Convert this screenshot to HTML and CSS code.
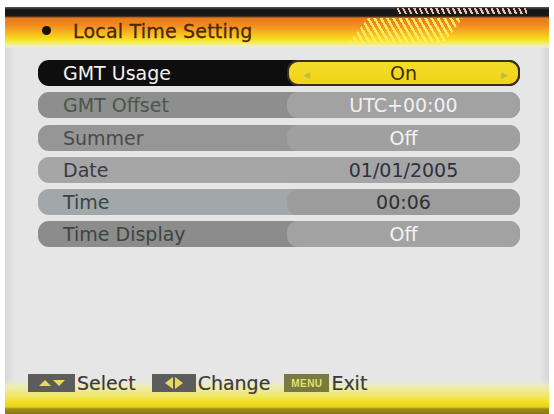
FILE: index.html
```html
<!DOCTYPE html>
<html>
<head>
<meta charset="utf-8">
<link rel="stylesheet" href="styles.css">
</head>
<body>
<div class="screen">
  <div class="header">
    <div class="stripes"></div>
    <div class="dashes"></div>
    <span class="bullet"></span>
    <span class="title">Local Time Setting</span>
  </div>
  <div class="list">
    <div class="row active">
      <div class="label">GMT Usage</div>
      <div class="value"><span class="arr">&#9664;</span><span class="val">On</span><span class="arr">&#9654;</span></div>
    </div>
    <div class="row r2">
      <div class="label">GMT Offset</div>
      <div class="value"><span class="val">UTC+00:00</span></div>
    </div>
    <div class="row r3">
      <div class="label">Summer</div>
      <div class="value"><span class="val">Off</span></div>
    </div>
    <div class="row r4">
      <div class="label">Date</div>
      <div class="value"><span class="val">01/01/2005</span></div>
    </div>
    <div class="row r5">
      <div class="label">Time</div>
      <div class="value"><span class="val">00:06</span></div>
    </div>
    <div class="row r6">
      <div class="label">Time Display</div>
      <div class="value"><span class="val">Off</span></div>
    </div>
  </div>
  <div class="footer">
    <div class="keys">
      <span class="key k-ud"><svg width="30" height="10" viewBox="0 0 30 10"><polygon points="2,8 8,2 14,8" fill="#e8d860"/><polygon points="16,2 28,2 22,8" fill="#e8d860"/></svg></span>
      <span class="ktext">Select</span>
      <span class="key k-lr"><svg width="24" height="12" viewBox="0 0 24 12"><polygon points="11,0 11,12 3,6" fill="#e8d860"/><polygon points="13,0 13,12 21,6" fill="#e8d860"/></svg></span>
      <span class="ktext">Change</span>
      <span class="key k-menu">MENU</span>
      <span class="ktext">Exit</span>
    </div>
  </div>
</div>
</body>
</html>
```
FILE: styles.css
```css
html, body {
  margin: 0;
  padding: 0;
  background: #ffffff;
  width: 554px;
  height: 414px;
  overflow: hidden;
}
.screen {
  margin: 7px 5px 0 5px;
  height: 407px;
  background: linear-gradient(to right, #d9d9d9 0px, #e6e6e6 10px, #e6e6e6 534px, #d6d6d6 544px);
  display: flex;
  flex-direction: column;
  font-family: "DejaVu Sans", "Liberation Sans", sans-serif;
}
.header {
  position: relative;
  height: 41px;
  flex: none;
  display: flex;
  align-items: center;
  padding: 6px 0 0 37px;
  box-sizing: border-box;
  background: linear-gradient(to bottom, #5a5a5a 0px, #141414 3px, #1a1a1a 9px, #e87a1c 11px, #f08a20 18px, #f6b81e 26px, #f8dc1e 32px, #f4ec5c 36px, #eeeec8 39px, #e6e6e6 41px);
}
.stripes {
  position: absolute;
  left: 342px;
  top: 11px;
  width: 116px;
  height: 27px;
  background: repeating-linear-gradient(60deg, transparent 0px, transparent 3px, rgba(255, 236, 100, 0.95) 3px, rgba(255, 236, 100, 0.95) 5.5px);
  clip-path: polygon(18% 0, 100% 0, 82% 100%, 0 100%);
}
.dashes {
  position: absolute;
  left: 391px;
  top: 1px;
  width: 131px;
  height: 6px;
  background: repeating-linear-gradient(65deg, #2a1a10 0px, #2a1a10 3px, #d8c8c0 3px, #d8c8c0 5px);
}
.bullet {
  width: 9px;
  height: 9px;
  border-radius: 50%;
  background: #151008;
  margin-right: 22px;
}
.title {
  font-size: 19px;
  color: #4e2604;
  letter-spacing: 0.2px;
  -webkit-text-stroke: 0.3px #4e2604;
}
.list {
  display: flex;
  flex-direction: column;
  gap: 6.3px;
  padding: 12px 0 0 33px;
}
.row {
  width: 482px;
  height: 26px;
  border-radius: 11px;
  display: flex;
  align-items: center;
  font-size: 19px;
  line-height: 26px;
}
.label {
  flex: 1;
  padding-left: 25px;
  white-space: nowrap;
}
.value {
  width: 233px;
  height: 26px;
  box-sizing: border-box;
  border-radius: 11px;
  display: flex;
  align-items: center;
  justify-content: center;
  position: relative;
}
.val { text-align: center; }
.arr {
  position: absolute;
  top: 0;
  font-size: 9px;
  color: #c8b848;
}
.arr:first-child { left: 14px; }
.arr:last-child { right: 10px; }

.active { background: #0e0e0e; }
.active .label { color: #f2f2f2; }
.active .value {
  background: linear-gradient(to bottom, #f4dc2a, #f0d418);
  border: 2px solid #3a3018;
  color: #3a3000;
}
.r2 { background: #8e8e8e; }
.r2 .label { color: #4a564a; }
.r2 .value { background: #a2a2a2; color: #f0f0f2; }
.r3 { background: #969696; }
.r3 .label { color: #4a4a4a; }
.r3 .value { background: #a0a0a0; color: #f4f4f4; }
.r4 { background: #a6a6a6; }
.r4 .label { color: #3a3a44; }
.r4 .value { background: #a5a5a5; color: #303040; }
.r5 { background: #a2a7aa; }
.r5 .label { color: #384644; }
.r5 .value { background: #9c9c9c; color: #303030; }
.r6 { background: #8c8c8c; }
.r6 .label { color: #3c463c; }
.r6 .value { background: #a2a2a2; color: #f4f4f4; }

.footer {
  flex: 1;
  display: flex;
  flex-direction: column;
  justify-content: flex-end;
  background: linear-gradient(to top, #8a7a10 0px, #9c8a18 5px, #e8d018 7px, #f2e022 12px, #f0e870 19px, #ececb8 28px, rgba(230, 230, 230, 0) 34px);
}
.keys {
  display: flex;
  align-items: center;
  padding: 0 0 21px 23px;
  height: 20px;
}
.key {
  height: 18px;
  background: #5c5c5c;
  display: flex;
  align-items: center;
  justify-content: center;
}
.k-ud { width: 47px; }
.k-lr { width: 44px; margin-left: 16px; }
.k-menu {
  width: 45px;
  margin-left: 14px;
  background: #7a7a40;
  color: #e0e070;
  font-size: 10px;
  font-weight: bold;
  letter-spacing: 0.5px;
  font-family: "Liberation Sans", sans-serif;
}
.ktext {
  font-size: 19px;
  color: #3a3a3a;
  margin-left: 2px;
  -webkit-text-stroke: 0.2px #3a3a3a;
}
```
